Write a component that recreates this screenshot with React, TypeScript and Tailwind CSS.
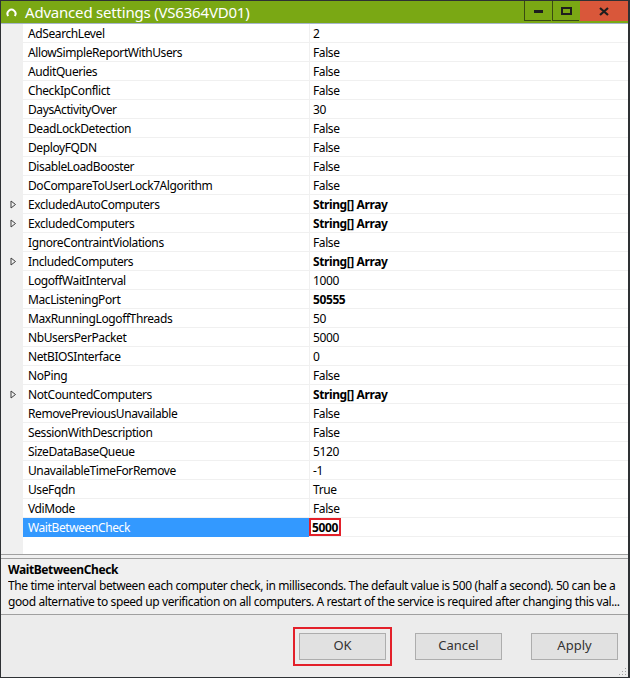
import React from 'react';

type Prop = { name: string; value: string; bold?: boolean; expand?: boolean };

const PROPS: Prop[] = [
  { name: 'AdSearchLevel', value: '2' },
  { name: 'AllowSimpleReportWithUsers', value: 'False' },
  { name: 'AuditQueries', value: 'False' },
  { name: 'CheckIpConflict', value: 'False' },
  { name: 'DaysActivityOver', value: '30' },
  { name: 'DeadLockDetection', value: 'False' },
  { name: 'DeployFQDN', value: 'False' },
  { name: 'DisableLoadBooster', value: 'False' },
  { name: 'DoCompareToUserLock7Algorithm', value: 'False' },
  { name: 'ExcludedAutoComputers', value: 'String[] Array', bold: true, expand: true },
  { name: 'ExcludedComputers', value: 'String[] Array', bold: true, expand: true },
  { name: 'IgnoreContraintViolations', value: 'False' },
  { name: 'IncludedComputers', value: 'String[] Array', bold: true, expand: true },
  { name: 'LogoffWaitInterval', value: '1000' },
  { name: 'MacListeningPort', value: '50555', bold: true },
  { name: 'MaxRunningLogoffThreads', value: '50' },
  { name: 'NbUsersPerPacket', value: '5000' },
  { name: 'NetBIOSInterface', value: '0' },
  { name: 'NoPing', value: 'False' },
  { name: 'NotCountedComputers', value: 'String[] Array', bold: true, expand: true },
  { name: 'RemovePreviousUnavailable', value: 'False' },
  { name: 'SessionWithDescription', value: 'False' },
  { name: 'SizeDataBaseQueue', value: '5120' },
  { name: 'UnavailableTimeForRemove', value: '-1' },
  { name: 'UseFqdn', value: 'True' },
  { name: 'VdiMode', value: 'False' },
];

const FONT = "font-['Segoe_UI','Noto_Sans',sans-serif]";

function Expander() {
  return (
    <svg width="7" height="9" viewBox="0 0 7 9" className="ml-[9px]">
      <path d="M1 1 L5.5 4.5 L1 8 Z" fill="none" stroke="#404040" strokeWidth="1" />
    </svg>
  );
}

function Row({ p }: { p: Prop }) {
  return (
    <div className="flex h-[19px] items-stretch">
      <div className="flex w-[22px] shrink-0 items-center bg-[#f0f0f0]">{p.expand && <Expander />}</div>
      <div className="flex w-[286px] shrink-0 items-center border-b border-[#f0f0f0] bg-white pl-[5px] pt-px">
        {p.name}
      </div>
      <div
        className={`flex flex-1 items-center border-b border-l border-[#f0f0f0] bg-white pl-[3px] pt-px ${p.bold ? 'font-bold' : ''}`}
      >
        {p.value}
      </div>
    </div>
  );
}

function WinButton({ children, close }: { children: React.ReactNode; close?: boolean }) {
  return (
    <div
      className={`flex h-[20px] items-center justify-center ${
        close ? 'w-[48px] bg-[#d9573a]' : 'mr-[1px] w-[27px] border-b border-l border-[#3a4a12] bg-[#7aa814]'
      }`}
    >
      {children}
    </div>
  );
}

function DlgButton({ label }: { label: string }) {
  return (
    <div className="flex h-[27px] w-[87px] items-center justify-center border border-[#adadad] bg-[#e1e1e1] text-[13px] tracking-normal text-[#333]">
      {label}
    </div>
  );
}

export default function App() {
  return (
    <div className={`${FONT} flex h-[678px] w-[630px] flex-col border-b border-l border-r-2 border-t border-[#2e3134] bg-[#ececec] text-[12px] tracking-[-0.4px] text-black`}>
      {/* Title bar */}
      <div className="flex h-[22px] shrink-0 items-start bg-[#7aa814]">
        <div className="flex h-[22px] flex-1 items-center pl-[5px]">
          <svg width="11" height="11" viewBox="0 0 11 11">
            <path d="M2.2 9 A4 4 0 1 1 8.8 9" fill="none" stroke="white" strokeWidth="2" />
          </svg>
          <span className="ml-[8px] text-[15px] leading-none tracking-[-0.2px] text-white">Advanced settings (VS6364VD01)</span>
        </div>
        <div className="flex">
          <WinButton>
            <div className="mt-[2px] h-[3px] w-[9px] bg-[#1e1e1e]" />
          </WinButton>
          <WinButton>
            <div className="h-[8px] w-[11px] border-2 border-[#1e1e1e]" />
          </WinButton>
          <WinButton close>
            <svg width="10" height="9" viewBox="0 0 10 9">
              <path d="M1 1 L9 8 M9 1 L1 8" stroke="#1e1e1e" strokeWidth="2.2" />
            </svg>
          </WinButton>
        </div>
      </div>
      <div className="h-px shrink-0 bg-[#a7b6cc]" />

      {/* Property grid */}
      <div className="flex h-[530px] shrink-0 flex-col bg-white">
        {PROPS.map((p) => (
          <Row key={p.name} p={p} />
        ))}
        <div className="flex h-[19px] items-stretch">
          <div className="w-[22px] shrink-0 bg-[#f0f0f0]" />
          <div className="flex w-[286px] shrink-0 items-center bg-[#3399ff] pl-[5px] pt-px text-white">WaitBetweenCheck</div>
          <div className="flex flex-1 items-stretch border-b border-[#f0f0f0] bg-white">
            <div className="flex items-center border-2 border-[#e3202a] px-[1px] pt-px font-bold">5000</div>
          </div>
        </div>
        <div className="flex flex-1">
          <div className="w-[22px] shrink-0 bg-[#f0f0f0]" />
          <div className="flex-1 bg-white" />
        </div>
      </div>

      {/* Splitter */}
      <div className="h-[4px] shrink-0 border-t border-[#a0a0a0] bg-[#f0f0f0]" />

      {/* Description */}
      <div className="flex h-[57px] shrink-0 flex-col border-b border-t border-[#a0a0a0] bg-[#f0f0f0] pl-[7px] pr-[6px] pt-[3px]">
        <div className="h-[16px] font-bold leading-[16px]">WaitBetweenCheck</div>
        <div className="h-[16px] truncate leading-[16px]">
          The time interval between each computer check, in milliseconds. The default value is 500 (half a second). 50 can be a
        </div>
        <div className="h-[16px] truncate leading-[16px]">
          good alternative to speed up verification on all computers. A restart of the service is required after changing this val...
        </div>
      </div>

      {/* Buttons */}
      <div className="relative flex flex-1 items-center justify-end gap-[29px] pr-[10px]">
        <div className="relative">
          <DlgButton label="OK" />
          <div className="absolute -inset-x-[6px] -inset-y-[6px] border-2 border-[#e3202a]" />
        </div>
        <DlgButton label="Cancel" />
        <DlgButton label="Apply" />
        <svg width="8" height="8" viewBox="0 0 8 8" className="absolute bottom-[1px] right-[1px]">
          <rect x="6" y="0" width="1" height="1" fill="#a0a0a0" />
          <rect x="3" y="3" width="1" height="1" fill="#a0a0a0" />
          <rect x="6" y="3" width="1" height="1" fill="#a0a0a0" />
          <rect x="0" y="6" width="1" height="1" fill="#a0a0a0" />
          <rect x="3" y="6" width="1" height="1" fill="#a0a0a0" />
          <rect x="6" y="6" width="1" height="1" fill="#a0a0a0" />
        </svg>
      </div>
    </div>
  );
}
